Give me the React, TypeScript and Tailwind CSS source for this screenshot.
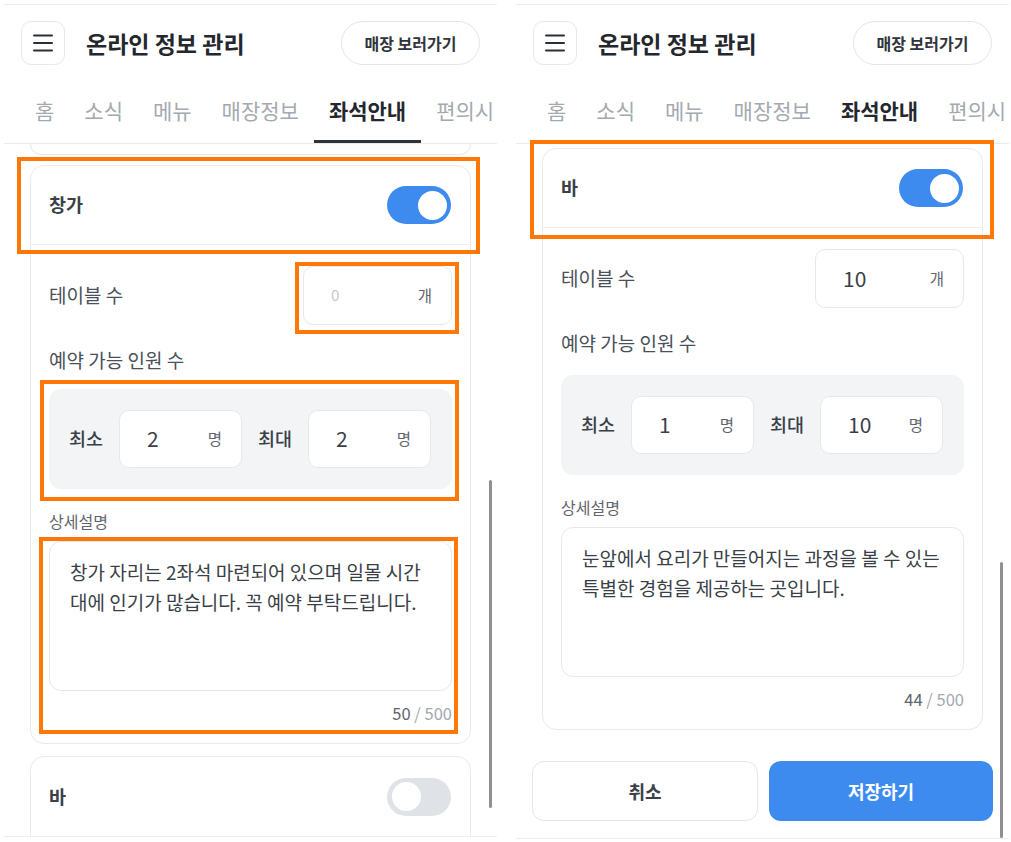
import React from 'react';

const BLUE = 'bg-[#3d8bef]';

function MenuIcon() {
  return (
    <svg width="20" height="18" viewBox="0 0 20 18" fill="none">
      <path d="M1 1.5h18M1 9h18M1 16.5h18" stroke="#2b2f36" strokeWidth="2" strokeLinecap="round" />
    </svg>
  );
}

function Toggle({ on }: { on: boolean }) {
  return (
    <div
      className={`relative w-[64px] h-[38px] rounded-full ${on ? BLUE : 'bg-[#dfe3e8]'}`}
    >
      <div
        className={`absolute top-[4.5px] w-[29px] h-[29px] rounded-full bg-white ${on ? 'right-[4.5px]' : 'left-[4.5px]'}`}
      />
    </div>
  );
}

function NumField({
  value,
  unit,
  placeholder,
  className,
}: {
  value?: string;
  unit: string;
  placeholder?: string;
  className: string;
}) {
  return (
    <div
      className={`flex items-center justify-between bg-white border border-[#e6e8eb] rounded-[10px] pl-[27px] pr-[19px] ${className}`}
    >
      {value ? (
        <span className="text-[21px] text-[#3a3f47]">{value}</span>
      ) : (
        <span className="text-[15px] text-[#c3c7cd]">{placeholder}</span>
      )}
      <span className="text-[15.5px] text-[#5f656d]">{unit}</span>
    </div>
  );
}

function SeatCard({
  title,
  tables,
  min,
  max,
  lines,
  count,
  boxGap,
}: {
  title: string;
  tables?: string;
  min: string;
  max: string;
  lines: string[];
  count: number;
  boxGap: string;
}) {
  return (
    <div className="border border-[#e8eaed] rounded-[14px] bg-white">
      <div className="h-[79px] flex items-center justify-between pl-[18px] pr-[19px] border-b border-[#eceef0]">
        <span className="text-[18.5px] font-bold text-[#3a4048]">{title}</span>
        <Toggle on />
      </div>
      <div className="pt-[21px] px-[18px] pb-[19px]">
        <div className="flex items-center justify-between">
          <span className="text-[19px] text-[#4a5059]">테이블 수</span>
          <NumField value={tables} placeholder="0" unit="개" className="w-[149px] h-[59px]" />
        </div>
        <div className="mt-[23px] text-[19px] leading-[24px] text-[#4a5059]">예약 가능 인원 수</div>
        <div
          className={`${boxGap} h-[100px] bg-[#f3f4f6] rounded-[12px] flex items-center gap-[16px] pl-[20px] pr-[21px]`}
        >
          <span className="text-[18.5px] font-medium text-[#3a4048]">최소</span>
          <NumField value={min} unit="명" className="flex-1 h-[58px]" />
          <span className="text-[18.5px] font-medium text-[#3a4048]">최대</span>
          <NumField value={max} unit="명" className="flex-1 h-[58px]" />
        </div>
        <div className="mt-[21px] text-[16px] leading-[22px] text-[#5f656d]">상세설명</div>
        <div className="mt-[9px] h-[150px] border border-[#e6e8eb] rounded-[12px] pt-[15px] px-[20px]">
          {lines.map((l) => (
            <div key={l} className="text-[19px] leading-[30px] text-[#3a3f47] whitespace-nowrap">
              {l}
            </div>
          ))}
        </div>
        <div className="mt-[11px] text-right text-[16.5px] leading-[22px]">
          <span className="text-[#5f656d]">{count}</span>
          <span className="text-[#a3a8ae]"> / 500</span>
        </div>
      </div>
    </div>
  );
}

function Phone({ children, bottom }: { children: React.ReactNode; bottom: string }) {
  const tabs = ['홈', '소식', '메뉴', '매장정보', '좌석안내', '편의시설'];
  return (
    <div className="w-[493px] shrink-0 flex flex-col">
      <div className="mt-[4px] border-t border-[#eeeff1]" />
      <div className="pt-[16px] px-[17px] flex items-center">
        <div className="w-[44px] h-[44px] border border-[#e6e8eb] rounded-[10px] flex items-center justify-center">
          <MenuIcon />
        </div>
        <h1 className="ml-[21px] text-[23px] font-bold text-[#24282e]">온라인 정보 관리</h1>
        <button className="ml-auto w-[139px] h-[44px] rounded-full border border-[#e3e5e8] text-[16px] font-semibold text-[#30353c]">
          매장 보러가기
        </button>
      </div>
      <div className="mt-[13px] border-b border-[#e8eaed]">
        <div className="w-[490px] h-[65px] flex pl-[16px] overflow-hidden whitespace-nowrap">
          {tabs.map((t) => (
            <div key={t} className="relative h-[65px] flex items-center px-[15px] shrink-0">
              <span
                className={`text-[21px] ${t === '좌석안내' ? 'font-bold text-[#24282e]' : 'text-[#a4a9b0]'}`}
              >
                {t}
              </span>
              {t === '좌석안내' && <div className="absolute left-0 right-0 bottom-0 h-[3px] bg-[#2f343b]" />}
            </div>
          ))}
        </div>
      </div>
      <div className={`${bottom} overflow-hidden px-[26px]`}>{children}</div>
      <div className="border-t border-[#eceef0]" />
    </div>
  );
}

function Box({ className }: { className: string }) {
  return <div className={`absolute border-[4px] border-[#ff7706] pointer-events-none ${className}`} />;
}

export default function App() {
  return (
    <div className="relative w-[1011px] h-[842px] bg-white overflow-hidden flex font-['Noto_Sans_CJK_KR','Noto_Sans',sans-serif]">
      <div className="ml-[4px]">
        <Phone bottom="h-[692px]">
          <div className="h-[11px] border border-t-0 border-[#e8eaed] rounded-b-[14px]" />
          <div className="mt-[10px]">
            <SeatCard
              title="창가"
              min="2"
              max="2"
              lines={['창가 자리는 2좌석 마련되어 있으며 일몰 시간', '대에 인기가 많습니다. 꼭 예약 부탁드립니다.']}
              count={50}
              boxGap="mt-[17px]"
            />
          </div>
          <div className="mt-[12px] border border-[#e8eaed] rounded-[14px] h-[100px]">
            <div className="h-[79px] flex items-center justify-between pl-[18px] pr-[19px]">
              <span className="text-[18.5px] font-bold text-[#3a4048]">바</span>
              <Toggle on={false} />
            </div>
          </div>
        </Phone>
      </div>
      <div className="ml-[19px]">
        <Phone bottom="h-[694px]">
          <div className="mt-[4px]">
            <SeatCard
              title="바"
              tables="10"
              min="1"
              max="10"
              lines={['눈앞에서 요리가 만들어지는 과정을 볼 수 있는', '특별한 경험을 제공하는 곳입니다.']}
              count={44}
              boxGap="mt-[20px]"
            />
          </div>
          <div className="mt-[31px] -mx-[10px] flex gap-[11px]">
            <button className="flex-1 h-[60px] rounded-[12px] border border-[#e3e5e8] text-[18px] font-bold text-[#3a4048]">
              취소
            </button>
            <button className={`flex-1 h-[60px] rounded-[12px] ${BLUE} text-[18px] font-bold text-white`}>
              저장하기
            </button>
          </div>
        </Phone>
      </div>

      {/* scroll indicators */}
      <div className="absolute left-[489px] top-[480px] w-[3px] h-[328px] rounded-full bg-[#8d8f92]" />
      <div className="absolute left-[1000px] top-[562px] w-[3px] h-[276px] rounded-full bg-[#8d8f92]" />

      {/* highlight boxes */}
      <Box className="left-[17px] top-[157px] w-[463px] h-[97px]" />
      <Box className="left-[295px] top-[262px] w-[164px] h-[72px]" />
      <Box className="left-[40px] top-[380px] w-[419px] h-[121px]" />
      <Box className="left-[39px] top-[537px] w-[419px] h-[197px]" />
      <Box className="left-[530px] top-[140px] w-[464px] h-[99px]" />
    </div>
  );
}
